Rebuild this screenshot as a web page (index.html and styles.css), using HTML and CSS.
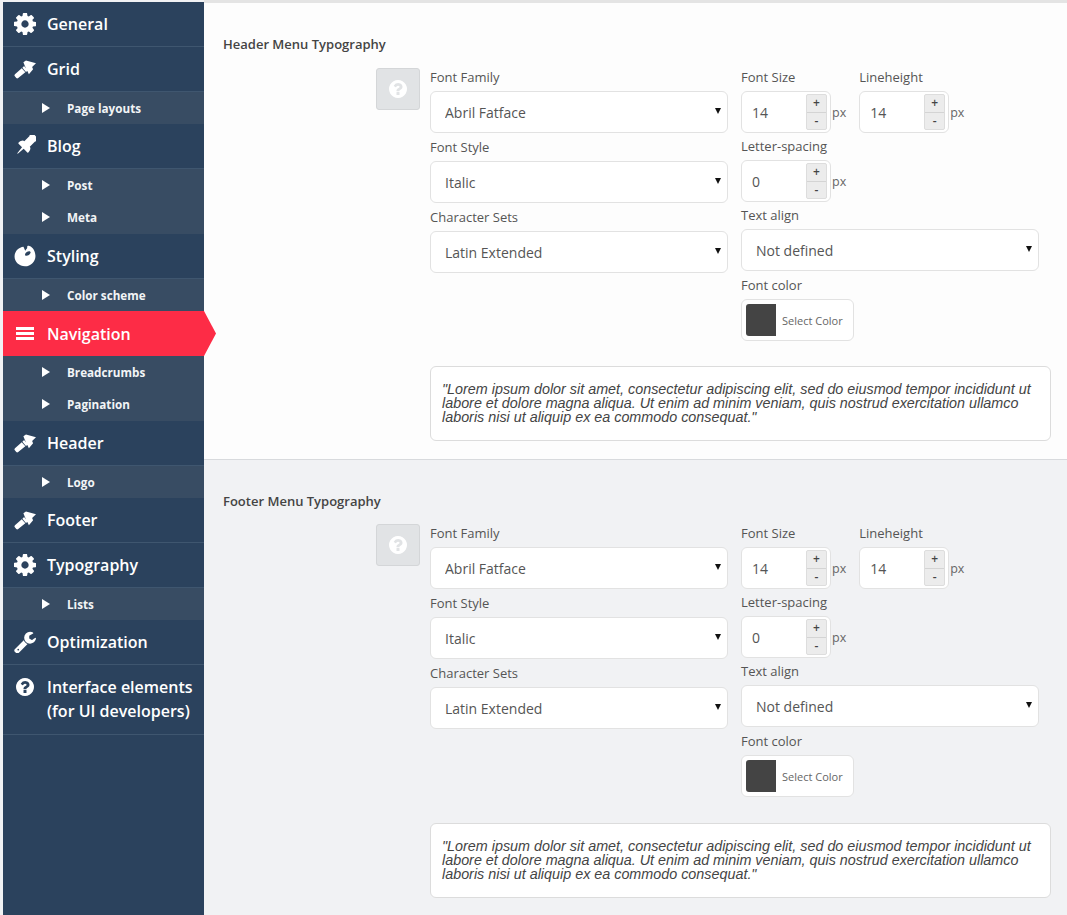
FILE: index.html
```html
<!DOCTYPE html>
<html lang="en">
<head>
  <meta charset="UTF-8">
  <meta name="viewport" content="width=device-width, initial-scale=1.0">
  <title>Theme Options</title>
  <link rel="stylesheet" href="styles.css">
</head>
<body>
  <svg class="icon-defs" width="0" height="0">
    <symbol id="i-cog" viewBox="0 -128 1536 1536"><path d="M1024 640q0-106-75-181t-181-75-181 75-75 181 75 181 181 75 181-75 75-181zm512-109v222q0 12-8 23t-20 13l-185 28q-19 54-39 91 35 50 107 138 10 12 10 25t-9 23q-27 37-99 108t-94 71q-12 0-26-9l-138-108q-44 23-91 38-16 136-29 186-7 28-36 28h-222q-14 0-24.5-8.5t-11.5-21.5l-28-184q-49-16-90-37l-141 107q-10 9-25 9-14 0-25-11-126-114-165-168-7-10-7-23 0-12 8-23 15-21 51-66.5t54-70.5q-27-50-41-99l-183-27q-13-2-21-12.5t-8-23.5v-222q0-12 8-23t19-13l186-28q14-46 39-92-40-57-107-138-10-12-10-24 0-10 9-23 26-36 98.5-107.5t94.5-71.5q13 0 26 10l138 107q44-23 91-38 16-136 29-186 7-28 36-28h222q14 0 24.5 8.5t11.5 21.5l28 184q49 16 90 37l142-107q9-9 24-9 13 0 25 10 129 119 165 170 7 8 7 22 0 12-8 23-15 21-51 66.5t-54 70.5q26 50 41 98l183 28q13 2 21 12.5t8 23.5z"/></symbol>
    <symbol id="i-brush" viewBox="0 0 68 68"><path d="M3 50 24 32 35 44 13 62q-3 2-6 0l-5-6q-2-3 1-6zM26 30 31 25 43 39 37 43zM33 23 29 13 37 8 68 16 56 28 59 35 46 50 42 42z"/></symbol>
    <symbol id="i-pin" viewBox="170 170 1452 1452"><g transform="rotate(45 896 896) translate(896 0) scale(.8 1) translate(-576 0)"><path d="M1152 1024q0 26-19 45t-45 19h-429l-51 483q-2 12-10.500 20.500t-20.500 8.500h-1q-27 0-32-27l-76-485h-404q-26 0-45-19t-19-45q0-123 78.500-221.500t177.500-98.500v-512q-52 0-90-38t-38-90 38-90 90-38h640q52 0 90 38t38 90-38 90-90 38v512q99 0 177.500 98.500t78.500 221.500z"/></g></symbol>
    <symbol id="i-palette" viewBox="0 0 20 20"><path fill-rule="evenodd" d="M8.6 1.6C4.6 2 .6 5.4.5 10.4.4 15.4 4.8 19.4 10 19.4c5.4 0 9.6-4.4 9.5-9.4C19.400 6 17.400 2 14 .9 12.500.5 11.800 1.200 12 2.200 12.200 3.200 10.800 3.800 10.200 5.200zM10 8.800C10.200 6.600 13 5.200 14.600 5.800 15.600 6.400 15 8 13.600 9 12 10 10 10 10 8.800z"/></symbol>
    <symbol id="i-wrench" viewBox="0 0 1664 1664"><g transform="translate(0 -64)"><path d="M384 1472q0-26-19-45t-45-19-45 19-19 45 19 45 45 19 45-19 19-45zm644-420l-682 682q-37 37-90 37-52 0-91-37l-106-108q-38-36-38-90 0-53 38-91l681-681q39 98 114.5 173.5t173.5 114.5zm634-435q0 39-23 106-47 134-164.5 217.5t-258.5 83.5q-185 0-316.5-131.5t-131.5-316.5 131.5-316.5 316.5-131.5q58 0 121.5 16.5t107.5 46.5q16 11 16 28t-16 28l-293 169v224l193 107q5-3 79-48.5t135.5-81 70.5-35.5q15 0 23.5 10t8.5 25z"/></g></symbol>
    <symbol id="i-help" viewBox="0 128 1536 1536"><path d="M896 1376v-192q0-14-9-23t-23-9h-192q-14 0-23 9t-9 23v192q0 14 9 23t23 9h192q14 0 23-9t9-23zm256-672q0-88-55.5-163t-138.5-116-170-41q-243 0-371 213-15 24 8 42l132 100q7 6 19 6 16 0 25-12 53-68 86-92 34-24 86-24 48 0 85.5 26t37.5 59q0 38-20 61t-68 45q-63 28-115.5 86.5t-52.5 125.5v36q0 14 9 23t23 9h192q14 0 23-9t9-23q0-19 21.5-49.5t54.5-49.5q32-18 49-28.5t46-35 44.5-48 28-60.5 12.5-81zm384 192q0 209-103 385.5t-279.5 279.5-385.5 103-385.5-103-279.5-279.5-103-385.5 103-385.5 279.5-279.5 385.5-103 385.5 103 279.5 279.5 103 385.5z"/></symbol>
  </svg>

  <div class="page">
    <nav class="sidebar">
      <a class="nav-item"><svg class="nav-icon"><use href="#i-cog"/></svg>General</a>
      <a class="nav-item"><svg class="nav-icon"><use href="#i-brush"/></svg>Grid</a>
      <div class="subnav">
        <a class="sub-item">Page layouts</a>
      </div>
      <a class="nav-item"><svg class="nav-icon"><use href="#i-pin"/></svg>Blog</a>
      <div class="subnav two">
        <a class="sub-item">Post</a>
        <a class="sub-item">Meta</a>
      </div>
      <a class="nav-item"><svg class="nav-icon"><use href="#i-palette"/></svg>Styling</a>
      <div class="subnav">
        <a class="sub-item">Color scheme</a>
      </div>
      <a class="nav-item active">
        <span class="bars"><i></i><i></i><i></i></span>Navigation
      </a>
      <div class="subnav two">
        <a class="sub-item">Breadcrumbs</a>
        <a class="sub-item">Pagination</a>
      </div>
      <a class="nav-item"><svg class="nav-icon"><use href="#i-brush"/></svg>Header</a>
      <div class="subnav">
        <a class="sub-item">Logo</a>
      </div>
      <a class="nav-item"><svg class="nav-icon"><use href="#i-brush"/></svg>Footer</a>
      <a class="nav-item"><svg class="nav-icon"><use href="#i-cog"/></svg>Typography</a>
      <div class="subnav">
        <a class="sub-item">Lists</a>
      </div>
      <a class="nav-item"><svg class="nav-icon"><use href="#i-wrench"/></svg>Optimization</a>
      <a class="nav-item tall"><svg class="nav-icon small"><use href="#i-help"/></svg><span>Interface elements<br>(for UI developers)</span></a>
    </nav>

    <main class="content">
      <section class="panel">
        <h3>Header Menu Typography</h3>
        <div class="panel-body">
          <button class="help-btn"><svg><use href="#i-help"/></svg></button>
          <div class="fields">
            <div class="col-left">
              <div class="field">
                <label>Font Family</label>
                <div class="select-wrap"><select><option>Abril Fatface</option></select></div>
              </div>
              <div class="field">
                <label>Font Style</label>
                <div class="select-wrap"><select><option>Italic</option></select></div>
              </div>
              <div class="field">
                <label>Character Sets</label>
                <div class="select-wrap"><select><option>Latin Extended</option></select></div>
              </div>
            </div>
            <div class="col-right">
              <div class="spin-row">
                <div class="field">
                  <label>Font Size</label>
                  <div class="spin-line">
                    <div class="spinner"><input type="text" value="14"><div class="spin-btns"><b>+</b><b>-</b></div></div>
                    <span class="unit">px</span>
                  </div>
                </div>
                <div class="field">
                  <label>Lineheight</label>
                  <div class="spin-line">
                    <div class="spinner"><input type="text" value="14"><div class="spin-btns"><b>+</b><b>-</b></div></div>
                    <span class="unit">px</span>
                  </div>
                </div>
              </div>
              <div class="field">
                <label>Letter-spacing</label>
                <div class="spin-line">
                  <div class="spinner"><input type="text" value="0"><div class="spin-btns"><b>+</b><b>-</b></div></div>
                  <span class="unit">px</span>
                </div>
              </div>
              <div class="field wide">
                <label>Text align</label>
                <div class="select-wrap"><select><option>Not defined</option></select></div>
              </div>
              <div class="field">
                <label>Font color</label>
                <div class="color-btn"><span class="swatch"></span>Select Color</div>
              </div>
            </div>
          </div>
        </div>
        <div class="preview">"Lorem ipsum dolor sit amet, consectetur adipiscing elit, sed do eiusmod tempor incididunt ut labore et dolore magna aliqua. Ut enim ad minim veniam, quis nostrud exercitation ullamco laboris nisi ut aliquip ex ea commodo consequat."</div>
      </section>

      <section class="panel alt">
        <h3>Footer Menu Typography</h3>
        <div class="panel-body">
          <button class="help-btn"><svg><use href="#i-help"/></svg></button>
          <div class="fields">
            <div class="col-left">
              <div class="field">
                <label>Font Family</label>
                <div class="select-wrap"><select><option>Abril Fatface</option></select></div>
              </div>
              <div class="field">
                <label>Font Style</label>
                <div class="select-wrap"><select><option>Italic</option></select></div>
              </div>
              <div class="field">
                <label>Character Sets</label>
                <div class="select-wrap"><select><option>Latin Extended</option></select></div>
              </div>
            </div>
            <div class="col-right">
              <div class="spin-row">
                <div class="field">
                  <label>Font Size</label>
                  <div class="spin-line">
                    <div class="spinner"><input type="text" value="14"><div class="spin-btns"><b>+</b><b>-</b></div></div>
                    <span class="unit">px</span>
                  </div>
                </div>
                <div class="field">
                  <label>Lineheight</label>
                  <div class="spin-line">
                    <div class="spinner"><input type="text" value="14"><div class="spin-btns"><b>+</b><b>-</b></div></div>
                    <span class="unit">px</span>
                  </div>
                </div>
              </div>
              <div class="field">
                <label>Letter-spacing</label>
                <div class="spin-line">
                  <div class="spinner"><input type="text" value="0"><div class="spin-btns"><b>+</b><b>-</b></div></div>
                  <span class="unit">px</span>
                </div>
              </div>
              <div class="field wide">
                <label>Text align</label>
                <div class="select-wrap"><select><option>Not defined</option></select></div>
              </div>
              <div class="field">
                <label>Font color</label>
                <div class="color-btn"><span class="swatch"></span>Select Color</div>
              </div>
            </div>
          </div>
        </div>
        <div class="preview">"Lorem ipsum dolor sit amet, consectetur adipiscing elit, sed do eiusmod tempor incididunt ut labore et dolore magna aliqua. Ut enim ad minim veniam, quis nostrud exercitation ullamco laboris nisi ut aliquip ex ea commodo consequat."</div>
      </section>
    </main>
  </div>
</body>
</html>
```

FILE: styles.css
```css
* {
  box-sizing: border-box;
}
html, body {
  height: 915px;
  margin: 0;
  overflow: hidden;
}
body {
  font-family: "Open Sans", sans-serif;
  color: #555;
  background: #fdfdfd;
}
.icon-defs {
  position: absolute;
}
.page {
  display: flex;
  height: 915px;
  padding-left: 3px;
  background: #f1f2f4;
}

/* sidebar */
.sidebar {
  width: 201px;
  flex-shrink: 0;
  margin-top: 2px;
  background: #2b425d;
}
.nav-item {
  position: relative;
  display: flex;
  align-items: center;
  height: 45px;
  padding-left: 11px;
  font-size: 16px;
  font-weight: 600;
  color: #fff;
  border-bottom: 1px solid #3f566f;
}
.nav-item.tall {
  align-items: flex-start;
  height: 70px;
  padding-top: 10px;
  line-height: 24px;
}
.nav-icon {
  width: 22px;
  height: 22px;
  margin-right: 11px;
  fill: #fff;
  flex-shrink: 0;
}
.nav-icon.small {
  margin-top: 1px;
  padding: 2px;
}
.nav-item.active {
  background: #fd2c46;
  border-bottom: none;
}
.nav-item.active::after {
  content: "";
  position: absolute;
  left: 100%;
  top: 0;
  width: 12px;
  height: 100%;
  background: #fd2c46;
  clip-path: polygon(0 0, 100% 50%, 0 100%);
}
.bars {
  display: flex;
  flex-direction: column;
  gap: 2px;
  width: 18px;
  margin: 0 13px 0 2px;
}
.bars i {
  display: block;
  height: 3px;
  background: #fff;
}
.subnav {
  height: 32px;
  padding-top: 1px;
  background: #384c63;
}
.subnav.two {
  height: 65px;
}
.sub-item {
  position: relative;
  display: block;
  height: 32px;
  line-height: 30px;
  padding-left: 64px;
  font-size: 11.7px;
  font-weight: 700;
  color: #f2f4f6;
}
.sub-item::before {
  content: "";
  position: absolute;
  left: 39px;
  top: 10px;
  border-left: 8px solid #fff;
  border-top: 5px solid transparent;
  border-bottom: 5px solid transparent;
}

/* content */
.content {
  flex: 1;
  background: #fdfdfd;
  border-top: 3px solid #e4e4e4;
}
.panel {
  height: 457px;
  padding: 34px 16px 0 19px;
  border-bottom: 1px solid #d8dadd;
}
.panel.alt {
  background: #f1f2f4;
  border-bottom: none;
}
.panel h3 {
  margin: 0 0 17px;
  font-size: 13px;
  font-weight: 600;
  line-height: 14px;
  color: #444;
}
.panel.alt h3 {
  margin-bottom: 16px;
}
.panel-body {
  display: flex;
  padding-left: 153px;
}
.help-btn {
  width: 44px;
  height: 42px;
  margin-right: 10px;
  padding: 0;
  border: 1px solid #d4d6d8;
  border-radius: 3px;
  background: #e1e3e5;
}
.help-btn svg {
  display: block;
  width: 18px;
  height: 18px;
  margin: 0 auto;
  fill: #fff;
}
.fields {
  display: flex;
  gap: 13px;
}
.col-left,
.col-right {
  width: 298px;
}
.spin-row {
  display: flex;
  gap: 13px;
}
.field label {
  display: block;
  height: 23px;
  font-size: 13px;
  line-height: 18px;
  color: #555;
}
.col-left .field {
  height: 70px;
}
.col-right .field {
  height: 69px;
}
.col-right .field.wide {
  height: 70px;
}
.select-wrap {
  position: relative;
}
.select-wrap::after {
  content: "";
  position: absolute;
  right: 7px;
  top: 17px;
  border-top: 6px solid #111;
  border-left: 3px solid transparent;
  border-right: 3px solid transparent;
}
select {
  display: block;
  width: 100%;
  height: 42px;
  padding: 0 14px;
  appearance: none;
  border: 1px solid #e2e2e2;
  border-radius: 6px;
  background: #fff;
  font: 14px "Open Sans", sans-serif;
  color: #555;
}
.spin-line {
  display: flex;
  align-items: center;
}
.spinner {
  display: flex;
  width: 90px;
  height: 42px;
  padding: 2px 3px 2px 0;
  border: 1px solid #e2e2e2;
  border-radius: 6px;
  background: #fff;
}
.spinner input {
  width: 64px;
  border: 0;
  padding: 0 0 0 10px;
  font: 14px "Open Sans", sans-serif;
  color: #555;
  background: transparent;
}
.spin-btns {
  display: flex;
  flex-direction: column;
  width: 21px;
  border: 1px solid #ddd;
  border-radius: 2px;
  background: #ececec;
}
.spin-btns b {
  flex: 1;
  font-weight: 600;
  font-size: 12px;
  line-height: 15px;
  text-align: center;
  color: #444;
}
.spin-btns b + b {
  border-top: 1px solid #d4d4d4;
}
.unit {
  margin-left: 1px;
  font-size: 12.5px;
  color: #666;
}
.color-btn {
  display: flex;
  align-items: center;
  width: 113px;
  height: 42px;
  padding: 0 4px;
  border: 1px solid #e2e2e2;
  border-radius: 6px;
  background: #fff;
  font-size: 11px;
  color: #666;
}
.swatch {
  width: 30px;
  height: 32px;
  margin-right: 6px;
  border-radius: 3px 0 0 3px;
  background: #444;
}
.preview {
  width: 621px;
  height: 75px;
  margin: 21px 0 0 207px;
  padding: 15px 11px 0;
  border: 1px solid #dcdcdc;
  border-radius: 6px;
  background: #fff;
  font: italic 14.35px/14px "Liberation Sans", Arial, sans-serif;
  color: #444;
}
.panel.alt .preview {
  margin-top: 22px;
}
```
